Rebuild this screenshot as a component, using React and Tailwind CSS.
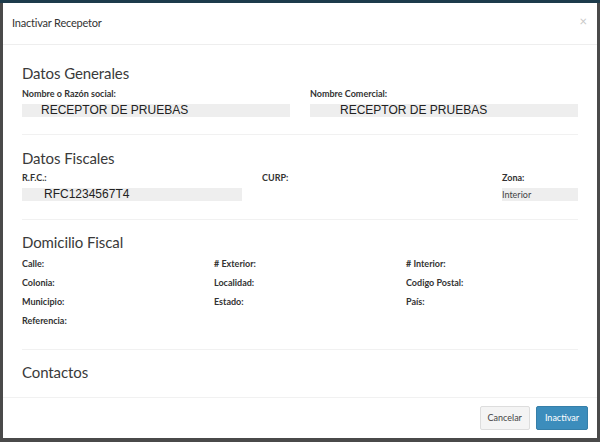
// Inactivar Recepetor modal
const Label = ({ children, className = '' }) => (
  <div className={`text-[9px] leading-[12px] font-bold text-[#333] ${className}`}>{children}</div>
);

const ValueBox = ({ children, className = '' }) => (
  <div className={`h-[13px] bg-[#eeeeee] text-[12px] leading-[13px] text-[#222] font-['Liberation_Sans',Arial,sans-serif] ${className}`}>
    {children}
  </div>
);

const Heading = ({ children }) => (
  <h3 className="text-[15px] leading-[20px] text-[#3a3a3a] font-normal tracking-[-0.1px]">{children}</h3>
);

const Divider = ({ className = '' }) => <div className={`h-px bg-[#f1f1f1] ${className}`} />;

const domicilio = [
  ['Calle:', '# Exterior:', '# Interior:'],
  ['Colonia:', 'Localidad:', 'Codigo Postal:'],
  ['Municipio:', 'Estado:', 'País:'],
  ['Referencia:', '', ''],
];

export default function App() {
  return (
    <div className="h-[442px] w-[600px] bg-[#4a4a4a] border-t-[3px] border-t-[#1d3b4b] pl-[3px] pr-[3px] pb-[4px] font-['Lato','Noto_Sans',sans-serif] overflow-hidden">
      <div className="h-full bg-white flex flex-col">
        {/* header */}
        <div className="h-[42px] border-b border-[#eeeeee] flex items-center justify-between pl-[9px] pr-[10px] shrink-0">
          <span className="text-[11px] tracking-[-0.2px] text-[#333]">Inactivar Recepetor</span>
          <span className="text-[13px] text-[#c8c8c8] leading-none -mt-[4px]">×</span>
        </div>

        {/* body */}
        <div className="flex-1 px-[19px] pt-[18px]">
          <Heading>Datos Generales</Heading>
          <div className="grid grid-cols-2 gap-x-[20px] mt-[5px]">
            <div>
              <Label>Nombre o Razón social:</Label>
              <ValueBox className="mt-[4px] pl-[19px]">RECEPTOR DE PRUEBAS</ValueBox>
            </div>
            <div>
              <Label>Nombre Comercial:</Label>
              <ValueBox className="mt-[4px] pl-[30px]">RECEPTOR DE PRUEBAS</ValueBox>
            </div>
          </div>
          <Divider className="mt-[17px]" />

          <div className="mt-[13px]">
            <Heading>Datos Fiscales</Heading>
          </div>
          <div className="flex mt-[4px]">
            <div className="w-[240px]">
              <Label>R.F.C.:</Label>
              <ValueBox className="mt-[4px] w-[220px] pl-[22px]">RFC1234567T4</ValueBox>
            </div>
            <div className="w-[240px]">
              <Label>CURP:</Label>
            </div>
            <div className="flex-1">
              <Label>Zona:</Label>
              <div className="mt-[4px] h-[13px] bg-[#eeeeee] text-[9px] leading-[13px] text-[#444]">Interior</div>
            </div>
          </div>
          <Divider className="mt-[18px]" />

          <div className="mt-[12px]">
            <Heading>Domicilio Fiscal</Heading>
          </div>
          <div className="mt-[6px] flex flex-col gap-[7px]">
            {domicilio.map((row, i) => (
              <div key={i} className="grid grid-cols-[192px_192px_1fr]">
                {row.map((l, j) => (
                  <Label key={j}>{l}</Label>
                ))}
              </div>
            ))}
          </div>
          <Divider className="mt-[22px]" />

          <div className="mt-[12px]">
            <Heading>Contactos</Heading>
          </div>
        </div>

        {/* footer */}
        <div className="h-[41px] border-t border-[#f1f1f1] flex items-center justify-end gap-[6px] pr-[9px] shrink-0">
          <button className="h-[24px] px-[7px] bg-[#f4f4f4] border border-[#dddddd] rounded-[2px] text-[9px] text-[#444]">
            Cancelar
          </button>
          <button className="h-[24px] px-[8px] bg-[#3c8dbc] border border-[#367fa9] rounded-[2px] text-[9px] text-white">
            Inactivar
          </button>
        </div>
      </div>
    </div>
  );
}
